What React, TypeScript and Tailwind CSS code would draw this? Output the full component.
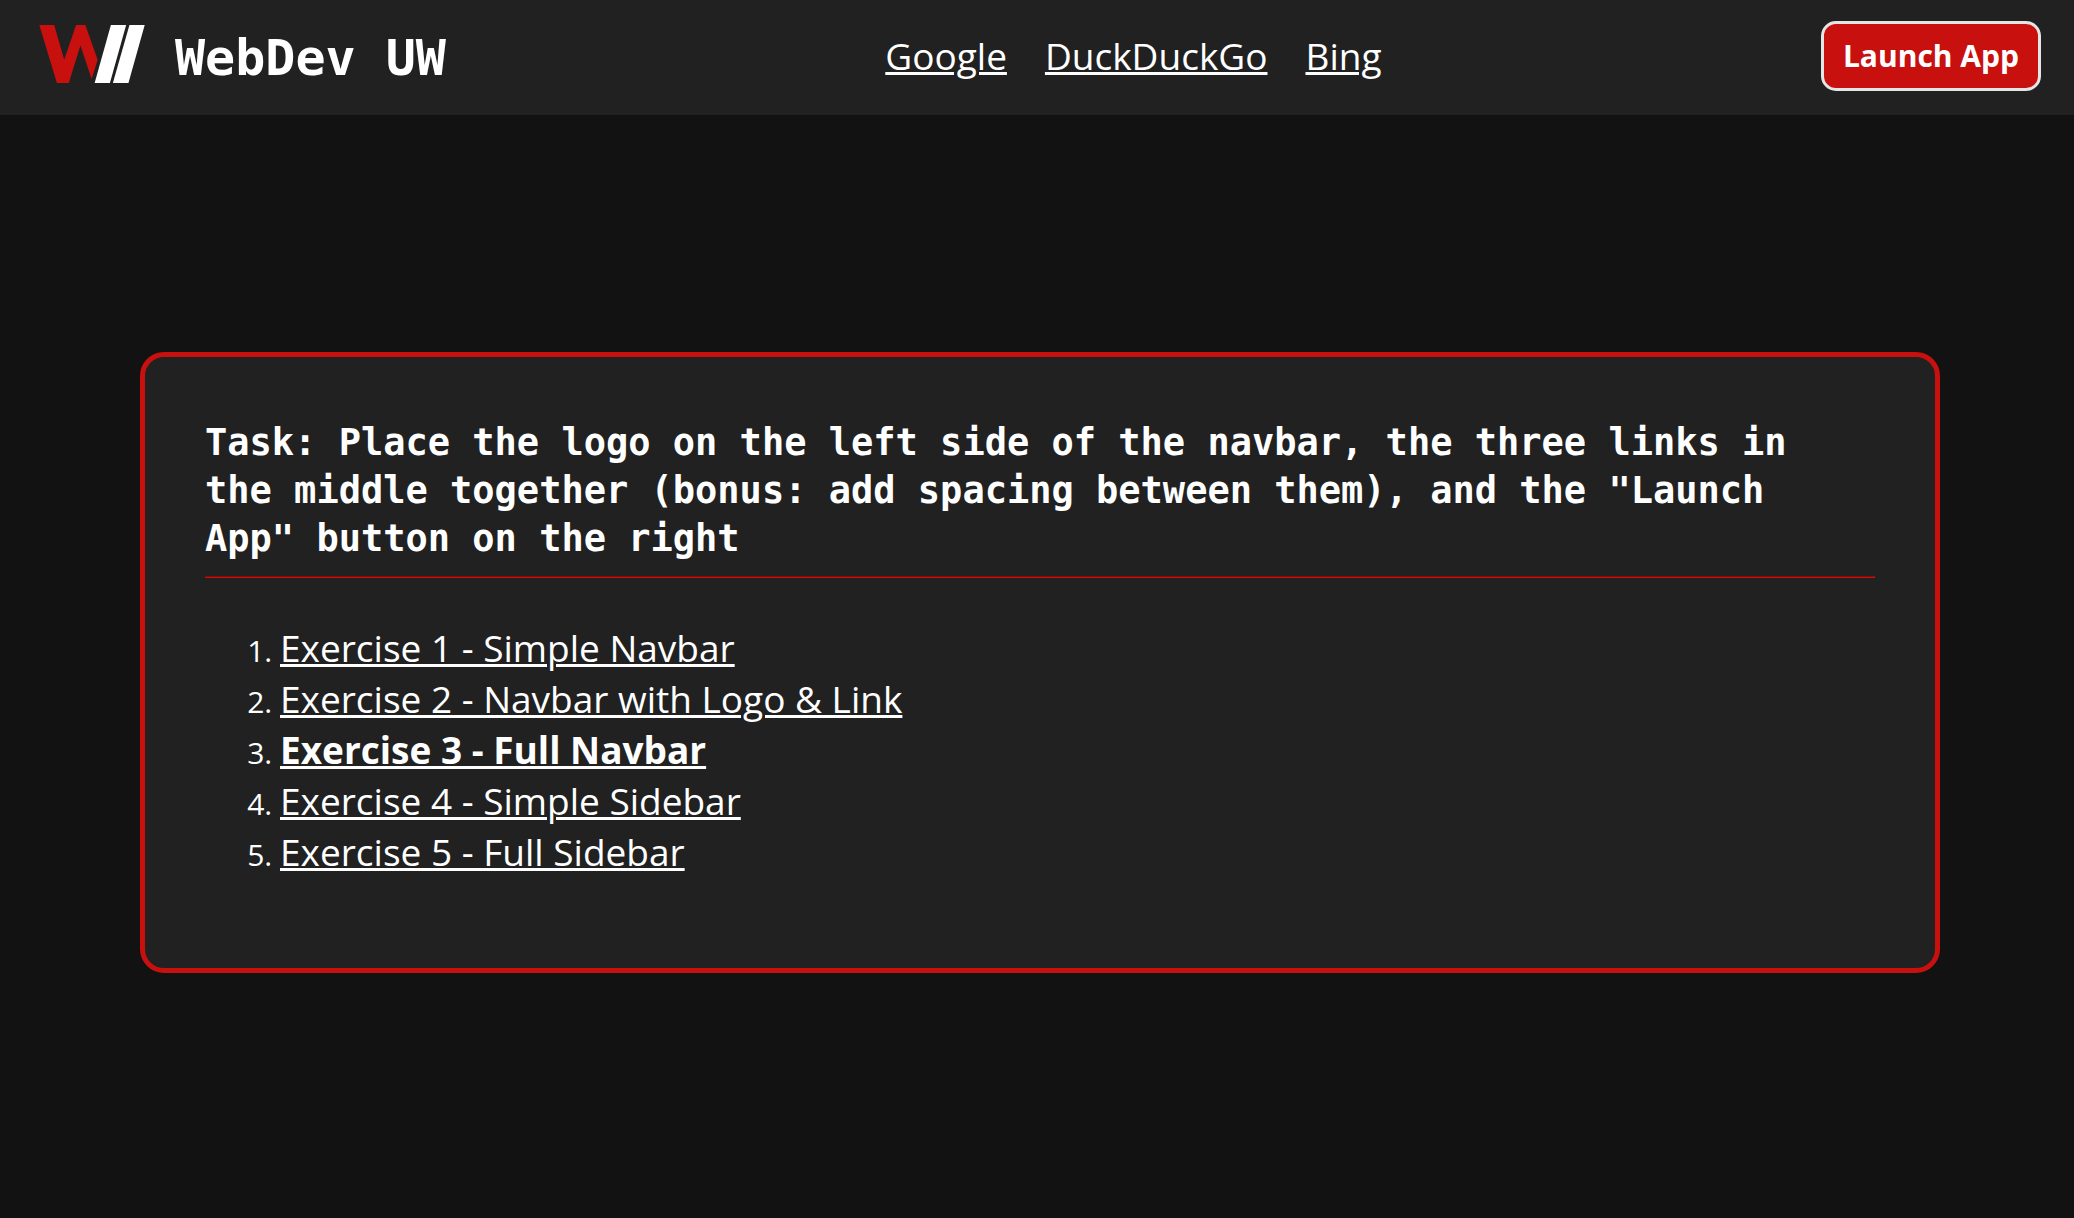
const searchLinks = [
  { label: "Google", href: "https://www.google.com" },
  { label: "DuckDuckGo", href: "https://duckduckgo.com" },
  { label: "Bing", href: "https://www.bing.com" },
];

const exercises = [
  { label: "Exercise 1 - Simple Navbar", href: "#exercise-1" },
  { label: "Exercise 2 - Navbar with Logo & Link", href: "#exercise-2" },
  { label: "Exercise 3 - Full Navbar", href: "#exercise-3", current: true },
  { label: "Exercise 4 - Simple Sidebar", href: "#exercise-4" },
  { label: "Exercise 5 - Full Sidebar", href: "#exercise-5" },
];

function Logo() {
  return (
    <svg viewBox="0 0 318 175" className="mb-1 h-[58px] w-[106px]" aria-hidden="true">
      <path fill="#c8100e" d="M0 0H45L75 105L111 0H139L176 105L158 163L124 62L89 175H53Z" />
      <path fill="#fff" d="M216 0H262L213 175H167Z" />
      <path fill="#fff" d="M272 0H318L269 175H222Z" />
    </svg>
  );
}

function Navbar() {
  return (
    <header className="flex h-[115px] items-center justify-between bg-[#212121] pr-[33px] pb-1 pl-[39px]">
      <div className="flex items-center gap-[30px]">
        <Logo />
        <span className="pt-1 font-['DejaVu_Sans_Mono',monospace] text-[50px] leading-[58px] font-bold whitespace-nowrap">
          WebDev UW
        </span>
      </div>
      <nav className="flex gap-[38px]">
        {searchLinks.map((link) => (
          <a
            key={link.label}
            href={link.href}
            className="text-[37px] leading-[51px] underline decoration-3"
          >
            {link.label}
          </a>
        ))}
      </nav>
      <button
        type="button"
        className="h-[70px] rounded-[15px] border-3 border-[#e5e5e5] bg-[#c8100e] px-[19px] text-[30px] leading-[41px] font-bold whitespace-nowrap"
      >
        Launch App
      </button>
    </header>
  );
}

export default function App() {
  return (
    <div className="flex min-h-screen flex-col bg-[#121212] font-['Open_Sans',sans-serif] text-white">
      <Navbar />
      <main className="flex grow flex-col items-center justify-center pb-2 pl-[6px]">
        <section className="w-full max-w-[1800px] rounded-[24px] border-5 border-[#c8100e] bg-[#212121] px-[60px] pt-[62px] pb-[91px]">
          <h1 className="pr-2 font-['DejaVu_Sans_Mono',monospace] text-[37px] leading-[48px] font-bold">
            Task: Place the logo on the left side of the navbar, the three links in the middle
            together (bonus: add spacing between them), and the "Launch App" button on the right
          </h1>
          <hr className="mt-[13px] mb-11 border border-t-[#850b09] border-r-[#c8100e] border-b-[#c8100e] border-l-[#850b09]" />
          <ol className="list-decimal pl-[75px] text-[30px] leading-10">
            {exercises.map((exercise) => (
              <li key={exercise.label}>
                <a
                  href={exercise.href}
                  aria-current={exercise.current ? "page" : undefined}
                  className={
                    exercise.current
                      ? "text-[37px] leading-[51px] font-bold underline decoration-3"
                      : "text-[37px] leading-[51px] underline decoration-3"
                  }
                >
                  {exercise.label}
                </a>
              </li>
            ))}
          </ol>
        </section>
      </main>
    </div>
  );
}
